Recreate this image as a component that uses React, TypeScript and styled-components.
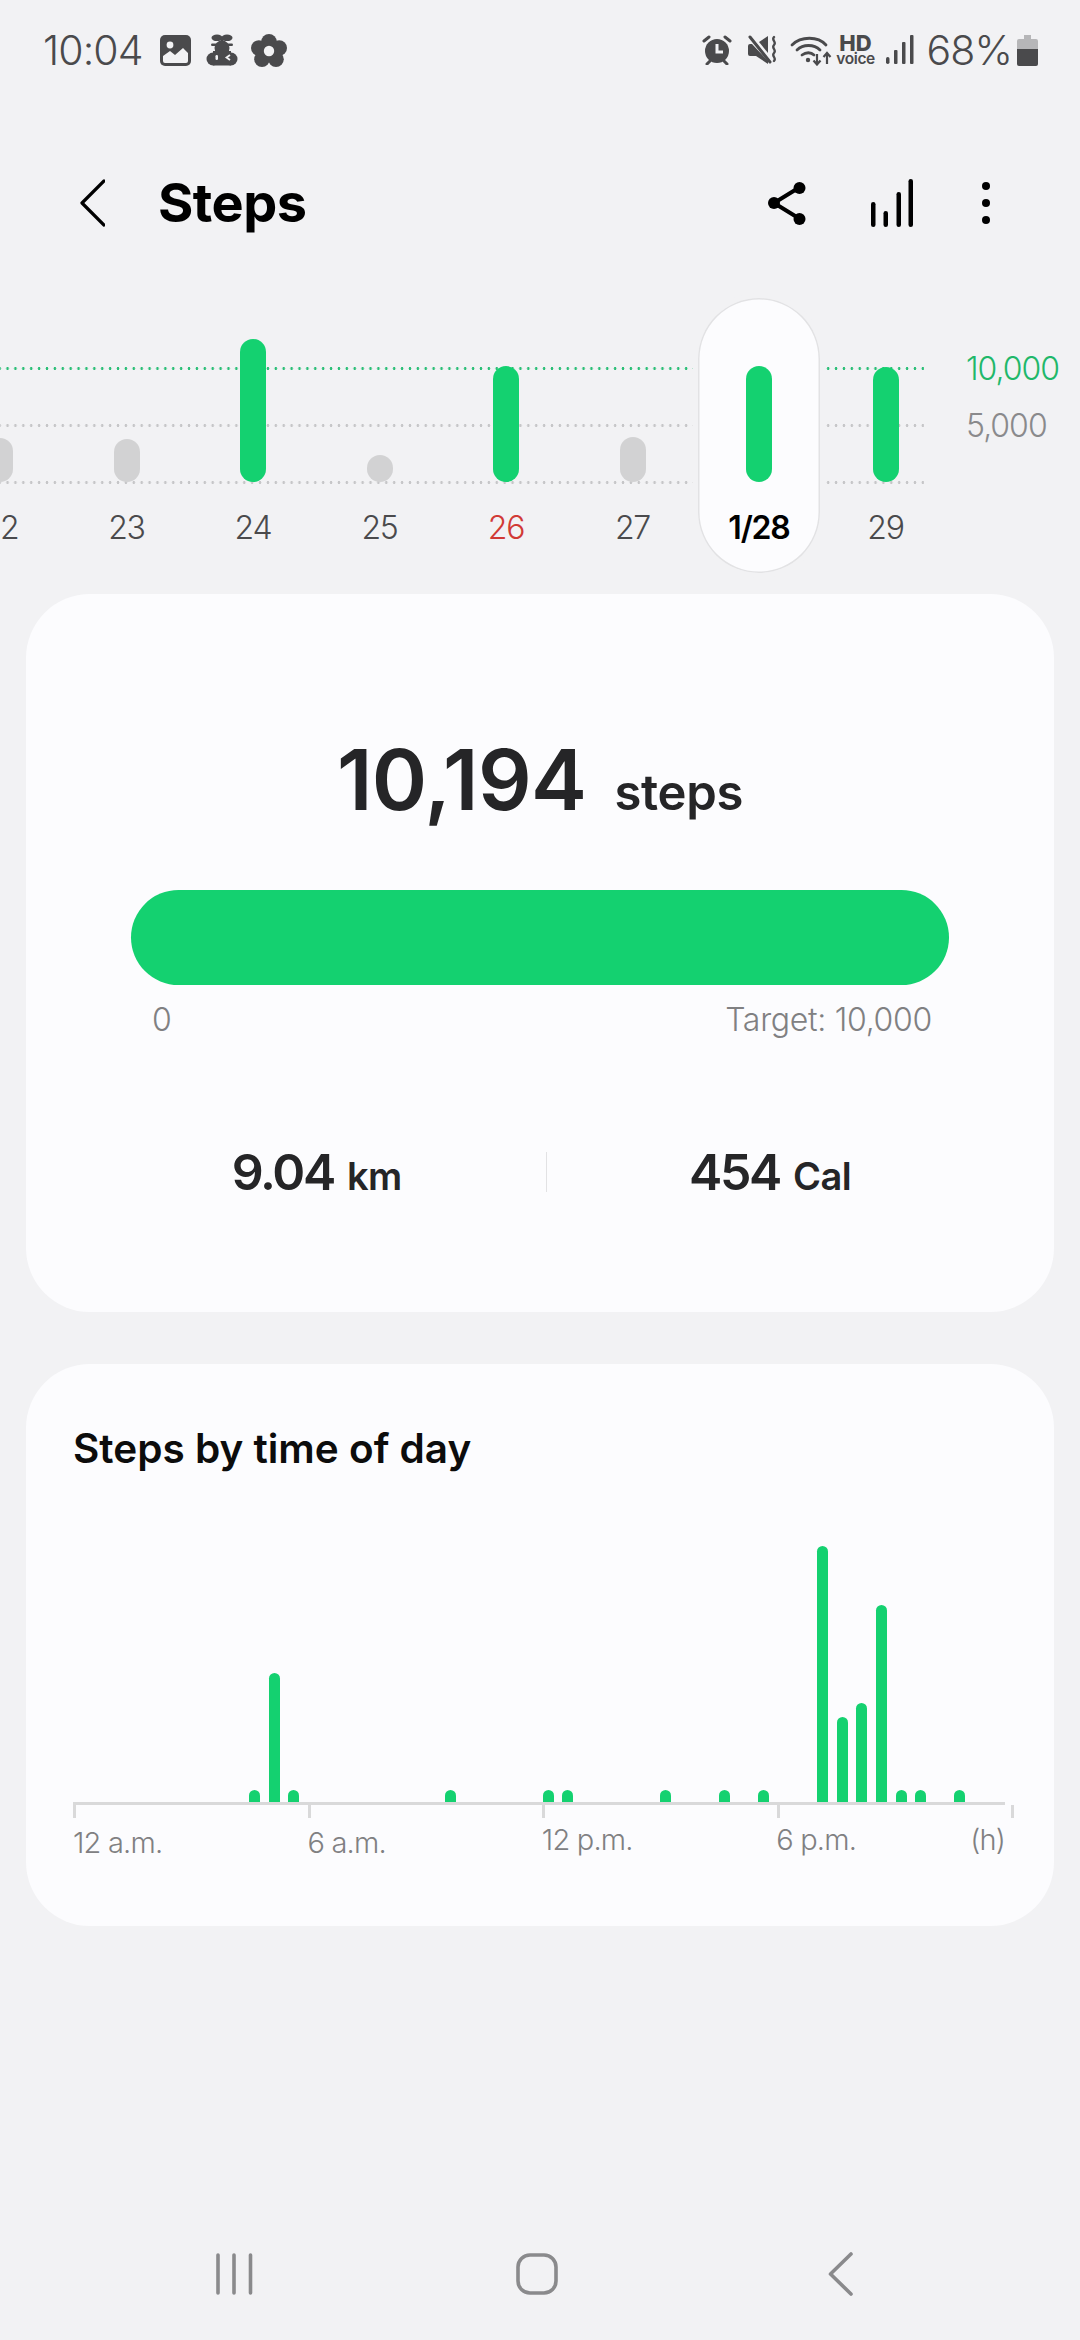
import React from "react";
import styled, { createGlobalStyle } from "styled-components";

const GREEN = "#14d170";
const INK = "#4a4a4c";

const Global = createGlobalStyle`
  html, body { margin: 0; padding: 0; background: #f2f2f4; }
  * { box-sizing: border-box; }
  body { font-family: Inter, "Noto Sans", sans-serif; }
`;

const Screen = styled.div`
  width: 1080px;
  height: 2340px;
  display: flex;
  flex-direction: column;
  background: #f2f2f4;
  overflow: hidden;
`;

/* ---------- status bar ---------- */
const StatusBar = styled.div`
  height: 100px;
  padding: 0 42px 0 43px;
  display: flex;
  align-items: center;
  justify-content: space-between;
  color: ${INK};
`;
const StatusGroup = styled.div`
  display: flex;
  align-items: center;
`;
const StatusText = styled.span<{ $gap?: number }>`
  margin-left: ${(p) => p.$gap ?? 0}px;
  font-size: 41px;
  font-weight: 300;
  line-height: 40px;
  letter-spacing: -0.9px;
`;
const StatusIcon = styled.svg<{ $gap?: number }>`
  display: block;
  flex: none;
  margin-left: ${(p) => p.$gap ?? 0}px;
`;
const HdVoice = styled.div`
  margin-left: 8px;
  width: 32px;
  display: flex;
  flex-direction: column;
  align-items: center;
  font-weight: 800;
`;
const HdTop = styled.div`
  font-size: 22px;
  line-height: 17px;
`;
const HdBottom = styled.div`
  font-size: 15.5px;
  line-height: 13px;
  font-weight: 600;
  letter-spacing: -0.4px;
`;

/* ---------- header ---------- */
const Header = styled.div`
  height: 106px;
  margin: 50px 0 42px;
  display: flex;
  align-items: center;
  padding: 0 0 0 80px;
`;
const Title = styled.h1`
  margin: 0 0 0 53px;
  font-size: 54px;
  line-height: 60px;
  font-weight: 700;
  color: #000;
  letter-spacing: -0.5px;
`;
const HeaderActions = styled.div`
  margin-left: auto;
  display: flex;
  align-items: center;
  padding-right: 90px;
`;
const HeaderIcon = styled.svg<{ $gap?: number }>`
  display: block;
  flex: none;
  margin-left: ${(p) => p.$gap ?? 0}px;
`;

/* ---------- day strip ---------- */
const Strip = styled.div`
  position: relative;
  height: 275px;
  margin-bottom: 21px;
`;
const Grid = styled.div`
  position: absolute;
  top: 42px;
  left: 0;
  display: flex;
  flex-direction: column;
`;
const GridRow = styled.div`
  height: 57px;
  display: flex;
  align-items: center;
`;
const GridLine = styled.div<{ $color: string }>`
  width: 924px;
  height: 3px;
  background-image: radial-gradient(circle at center, ${(p) => p.$color} 1.2px, transparent 1.6px);
  background-size: 7.9px 3px;
  background-position: 3.6px 0;
`;
const GridLabel = styled.span<{ $color: string }>`
  margin-left: 42px;
  font-size: 32px;
  line-height: 40px;
  font-weight: 300;
  letter-spacing: -1px;
  color: ${(p) => p.$color};
`;
const Days = styled.div`
  position: relative;
  display: flex;
  margin-left: -63.25px;
`;
const Day = styled.div`
  flex: none;
  width: 126.5px;
  display: flex;
  justify-content: center;
`;
const DayInner = styled.div<{ $selected?: boolean }>`
  width: 122px;
  height: 275px;
  display: flex;
  flex-direction: column;
  align-items: center;
  border-radius: 61px;
  background: ${(p) => (p.$selected ? "#fcfcfe" : "transparent")};
  box-shadow: ${(p) => (p.$selected ? "inset 0 0 0 1.5px #e2e2e4, 0 0 0 5px #f2f2f4" : "none")};
`;
const BarSlot = styled.div`
  height: 184px;
  display: flex;
  align-items: flex-end;
`;
const DayBar = styled.div<{ $on: boolean }>`
  width: 26px;
  border-radius: 13px;
  background: ${(p) => (p.$on ? GREEN : "#d2d2d3")};
`;
const DayLabel = styled.span<{ $tone?: "red" | "strong" }>`
  margin-top: 26px;
  font-size: 32px;
  line-height: 40px;
  letter-spacing: -1.2px;
  font-weight: ${(p) => (p.$tone === "strong" ? 600 : 300)};
  color: ${(p) => (p.$tone === "strong" ? "#000" : p.$tone === "red" ? "#d13a36" : INK)};
`;

/* ---------- cards ---------- */
const Card = styled.section<{ $h: number; $mt?: number }>`
  flex: none;
  margin: ${(p) => p.$mt ?? 0}px 26px 0;
  height: ${(p) => p.$h}px;
  background: #fcfcfe;
  border-radius: 64px;
`;
const SummaryCard = styled(Card)`
  padding-top: 136px;
  display: flex;
  flex-direction: column;
`;
const TotalRow = styled.div`
  display: flex;
  justify-content: center;
  align-items: baseline;
  color: #252527;
`;
const TotalValue = styled.span`
  font-size: 84px;
  line-height: 100px;
  font-weight: 600;
  letter-spacing: -0.6px;
`;
const TotalUnit = styled.span`
  margin-left: 28px;
  font-size: 49px;
  line-height: 50px;
  font-weight: 600;
  letter-spacing: -0.3px;
`;
const Progress = styled.div`
  margin: 60px 105px 0;
  height: 95px;
  background: ${GREEN};
  border-radius: 48px;
`;
const ProgressScale = styled.div`
  margin: 15px 122px 0 126px;
  display: flex;
  justify-content: space-between;
  font-size: 32px;
  line-height: 40px;
  font-weight: 300;
  letter-spacing: -0.3px;
  color: #808082;
`;
const Stats = styled.div`
  margin: 102px 0 0 62px;
  display: flex;
  align-items: center;
`;
const Stat = styled.div<{ $w: number }>`
  width: ${(p) => p.$w}px;
  display: flex;
  justify-content: center;
  align-items: baseline;
  color: #252527;
`;
const StatValue = styled.span`
  font-size: 50px;
  line-height: 60px;
  font-weight: 600;
  letter-spacing: -2.3px;
`;
const StatUnit = styled.span`
  margin-left: 13px;
  font-size: 38px;
  line-height: 40px;
  font-weight: 600;
  letter-spacing: -0.6px;
`;
const StatDivider = styled.div`
  flex: none;
  width: 1px;
  height: 40px;
  background: #e2e2e4;
`;
const DayCard = styled(Card)`
  padding-top: 60px;
`;
const CardTitle = styled.h2`
  margin: 0 0 0 47px;
  font-size: 40.5px;
  line-height: 50px;
  font-weight: 600;
  color: #0c0c0c;
`;
const Plot = styled.div`
  height: 328px;
  margin-left: 42.3px;
  display: flex;
  align-items: flex-end;
`;
const PlotSlot = styled.div`
  flex: none;
  width: 19.6px;
  display: flex;
  justify-content: center;
`;
const PlotBar = styled.div`
  width: 11px;
  background: ${GREEN};
  border-radius: 5.5px 5.5px 0 0;
`;
const Axis = styled.div`
  margin-left: 47px;
  width: 932px;
  height: 16px;
  border-top: 3px solid #d9d9da;
  display: flex;
`;
const Tick = styled.div`
  flex: none;
  width: 3px;
  height: 13px;
  margin-right: 231.6px;
  background: #d9d9da;
`;
const LastTick = styled(Tick)`
  margin-right: 0;
  margin-left: auto;
`;
const AxisLabels = styled.div`
  margin: 6px 0 0 47px;
  width: 932px;
  display: flex;
  align-items: flex-start;
`;
const AxisLabel = styled.span<{ $raised?: boolean }>`
  flex: none;
  width: 234.4px;
  margin-top: ${(p) => (p.$raised ? -3 : 0)}px;
  font-size: 29px;
  line-height: 38px;
  font-weight: 300;
  letter-spacing: -0.8px;
  color: #808082;
`;
const AxisEnd = styled(AxisLabel)`
  width: auto;
`;
const AxisUnit = styled(AxisEnd)`
  margin-left: auto;
`;

/* ---------- nav bar ---------- */
const NavBar = styled.div`
  margin-top: auto;
  height: 132px;
  display: flex;
  align-items: center;
  padding-left: 215px;
`;
const NavIcon = styled.svg<{ $gap?: number }>`
  display: block;
  flex: none;
  margin-left: ${(p) => p.$gap ?? 0}px;
`;

const days = [
  { label: "22", h: 44, on: false },
  { label: "23", h: 43, on: false },
  { label: "24", h: 143, on: true },
  { label: "25", h: 27, on: false },
  { label: "26", h: 116, on: true, tone: "red" as const },
  { label: "27", h: 45, on: false },
  { label: "1/28", h: 116, on: true, tone: "strong" as const, selected: true },
  { label: "29", h: 115, on: true },
];

const slots: Record<number, number> = {
  9: 12, 10: 129, 11: 12, 19: 12, 24: 12, 25: 12, 30: 12, 33: 12, 35: 12,
  38: 256, 39: 85, 40: 99, 41: 197, 42: 12, 43: 12, 45: 12,
};

export default function App() {
  return (
    <Screen>
      <Global />
      <StatusBar>
        <StatusGroup>
          <StatusText>10:04</StatusText>
          <StatusIcon $gap={17} width="31" height="31" viewBox="0 0 31 31">
            <rect width="31" height="31" rx="5" fill={INK} />
            <circle cx="10" cy="10" r="3.4" fill="#f2f2f4" />
            <path d="M3 21l7-5 5 4 8-7 5 5v8a2 2 0 0 1-2 2H5a2 2 0 0 1-2-2z" fill="#f2f2f4" />
          </StatusIcon>
          <StatusIcon $gap={15} width="32" height="32" viewBox="0 0 32 32">
            <ellipse cx="11" cy="3.8" rx="5.500" ry="3.300" fill={INK} />
            <ellipse cx="21" cy="3.800" rx="5.500" ry="3.300" fill={INK} />
            <rect x="14.500" y="4" width="3" height="6" fill={INK} />
            <circle cx="16" cy="14" r="7.500" fill={INK} />
            <rect x="5" y="9.500" width="22" height="2.500" rx="1.200" fill={INK} />
            <circle cx="7" cy="25" r="6.500" fill={INK} />
            <circle cx="25" cy="25" r="6.500" fill={INK} />
            <rect x="7" y="17" width="18" height="14.500" fill={INK} />
            <rect x="9.500" y="21" width="2.500" height="5" rx="1.200" fill="#f2f2f4" />
            <path d="M24 21l-3.500 2.500 3.500 2.500" fill="none" stroke="#f2f2f4" strokeWidth="1.800" />
          </StatusIcon>
          <StatusIcon $gap={13} width="36" height="33" viewBox="0 0 36 33">
            <g fill={INK}>
              <circle cx="18" cy="7.800" r="7.800" />
              <circle cx="7.800" cy="14" r="7.800" />
              <circle cx="28.200" cy="14" r="7.800" />
              <circle cx="11" cy="25.200" r="7.800" />
              <circle cx="25" cy="25.200" r="7.800" />
              <circle cx="18" cy="17" r="9" />
            </g>
            <circle cx="18" cy="17" r="5.200" fill="#f2f2f4" />
          </StatusIcon>
        </StatusGroup>
        <StatusGroup>
          <StatusIcon width="30" height="30" viewBox="0 0 30 30">
            <circle cx="15" cy="16" r="12" fill={INK} />
            <path d="M15 9v8h6" fill="none" stroke="#f2f2f4" strokeWidth="3" />
            <path d="M2 6l5-4M28 6l-5-4M5 29l3-3M25 29l-3-3" stroke={INK} strokeWidth="3" strokeLinecap="round" />
          </StatusIcon>
          <StatusIcon $gap={15} width="30" height="30" viewBox="0 0 30 30">
            <path d="M1 11a2 2 0 0 1 2-2h2l16 17v3L9 21H3a2 2 0 0 1-2-2z" fill={INK} />
            <path d="M12 7l9-6v17z" fill={INK} />
            <path d="M3 2l20 25" stroke={INK} strokeWidth="3" strokeLinecap="round" />
            <path d="M27 2c-3 3 3 5 0 8s3 5 0 8 3 5 0 8" fill="none" stroke={INK} strokeWidth="2.400" strokeLinecap="round" />
          </StatusIcon>
          <StatusIcon $gap={13} width="42" height="32" viewBox="0 0 42 32">
            <g fill="none" stroke={INK} strokeWidth="2.800" strokeLinecap="round">
              <path d="M2 11c9-9 26-9 34 0" />
              <path d="M7 16c6-6 17-6 23 0" />
              <path d="M12 21c4-3 9-3 12 0" />
            </g>
            <circle cx="18" cy="26" r="2.200" fill={INK} />
            <g fill="none" stroke={INK} strokeWidth="2.200">
              <path d="M27 20v10M23.500 26.500l3.500 4 3.500-4" />
              <path d="M37 30V19M33.500 23l3.500-4 3.500 4" />
            </g>
          </StatusIcon>
          <HdVoice>
            <HdTop>HD</HdTop>
            <HdBottom>voice</HdBottom>
          </HdVoice>
          <StatusIcon $gap={14} width="28" height="30" viewBox="0 0 28 30">
            <g fill={INK}>
              <rect x="0" y="22" width="3.500" height="7" rx="1.700" />
              <rect x="8" y="15" width="3.500" height="14" rx="1" />
              <rect x="16" y="7" width="3.500" height="22" rx="1" />
              <rect x="24" y="0" width="3.500" height="29" rx="1" />
            </g>
          </StatusIcon>
          <StatusText $gap={13}>68%</StatusText>
          <StatusIcon $gap={5} width="21" height="31" viewBox="0 0 21 31">
            <path d="M7 0h7v4h5a2 2 0 0 1 2 2v9H0V6a2 2 0 0 1 2-2h5z" fill="#b6b6b8" />
            <path d="M0 14h21v15a2 2 0 0 1-2 2H2a2 2 0 0 1-2-2z" fill={INK} />
          </StatusIcon>
        </StatusGroup>
      </StatusBar>

      <Header>
        <HeaderIcon width="25" height="48" viewBox="0 0 25 48">
          <path d="M24 2L2 24l22 22" fill="none" stroke="#000" strokeWidth="3.200" strokeLinecap="round" strokeLinejoin="round" />
        </HeaderIcon>
        <Title>Steps</Title>
        <HeaderActions>
          <HeaderIcon width="38" height="44" viewBox="0 0 38 44">
            <path d="M6 22L32 6M6 22l26 16" stroke="#000" strokeWidth="4" />
            <circle cx="6" cy="22" r="6" />
            <circle cx="31.500" cy="7" r="6" />
            <circle cx="31.500" cy="38" r="6" />
          </HeaderIcon>
          <HeaderIcon $gap={65} width="42" height="48" viewBox="0 0 42 48">
            <rect x="0" y="23" width="4.500" height="25" rx="2.250" />
            <rect x="12.500" y="32" width="4.500" height="16" rx="2.250" />
            <rect x="25.500" y="13" width="4.500" height="35" rx="2.250" />
            <rect x="37.500" y="0" width="4.500" height="48" rx="2.250" />
          </HeaderIcon>
          <HeaderIcon $gap={69} width="8" height="42" viewBox="0 0 8 42">
            <circle cx="4" cy="4" r="4" />
            <circle cx="4" cy="21" r="4" />
            <circle cx="4" cy="38" r="4" />
          </HeaderIcon>
        </HeaderActions>
      </Header>

      <Strip>
        <Grid>
          <GridRow>
            <GridLine $color="#2cbf77" />
            <GridLabel $color="#1fb86a">10,000</GridLabel>
          </GridRow>
          <GridRow>
            <GridLine $color="#c6c6c8" />
            <GridLabel $color="#8a8a8c">5,000</GridLabel>
          </GridRow>
          <GridRow>
            <GridLine $color="#c6c6c8" />
          </GridRow>
        </Grid>
        <Days>
          {days.map((d) => (
            <Day key={d.label}>
              <DayInner $selected={d.selected}>
                <BarSlot>
                  <DayBar $on={d.on} style={{ height: d.h }} />
                </BarSlot>
                <DayLabel $tone={d.tone}>{d.label}</DayLabel>
              </DayInner>
            </Day>
          ))}
        </Days>
      </Strip>

      <SummaryCard $h={718}>
        <TotalRow>
          <TotalValue>10,194</TotalValue>
          <TotalUnit>steps</TotalUnit>
        </TotalRow>
        <Progress />
        <ProgressScale>
          <span>0</span>
          <span>Target: 10,000</span>
        </ProgressScale>
        <Stats>
          <Stat $w={457.5}>
            <StatValue>9.04</StatValue>
            <StatUnit>km</StatUnit>
          </Stat>
          <StatDivider />
          <Stat $w={447}>
            <StatValue>454</StatValue>
            <StatUnit>Cal</StatUnit>
          </Stat>
        </Stats>
      </SummaryCard>

      <DayCard $h={562} $mt={52}>
        <CardTitle>Steps by time of day</CardTitle>
        <Plot>
          {Array.from({ length: 48 }, (_, i) => (
            <PlotSlot key={i}>{slots[i] ? <PlotBar style={{ height: slots[i] }} /> : null}</PlotSlot>
          ))}
        </Plot>
        <Axis>
          <Tick />
          <Tick />
          <Tick />
          <Tick />
          <LastTick />
        </Axis>
        <AxisLabels>
          <AxisLabel>12 a.m.</AxisLabel>
          <AxisLabel>6 a.m.</AxisLabel>
          <AxisLabel $raised>12 p.m.</AxisLabel>
          <AxisEnd $raised>6 p.m.</AxisEnd>
          <AxisUnit $raised>(h)</AxisUnit>
        </AxisLabels>
      </DayCard>

      <NavBar>
        <NavIcon width="38" height="42" viewBox="0 0 38 42">
          <g stroke="#8a8a8c" strokeWidth="3.600" strokeLinecap="round">
            <path d="M3 2v38M19 2v38M35.500 2v38" />
          </g>
        </NavIcon>
        <NavIcon $gap={263} width="42" height="42" viewBox="0 0 42 42">
          <rect x="2" y="2" width="38" height="38" rx="12" fill="none" stroke="#8a8a8c" strokeWidth="3.600" />
        </NavIcon>
        <NavIcon $gap={270} width="25" height="44" viewBox="0 0 25 44">
          <path d="M23 2L2.500 22 23 42" fill="none" stroke="#8a8a8c" strokeWidth="3.600" strokeLinecap="round" strokeLinejoin="round" />
        </NavIcon>
      </NavBar>
    </Screen>
  );
}
